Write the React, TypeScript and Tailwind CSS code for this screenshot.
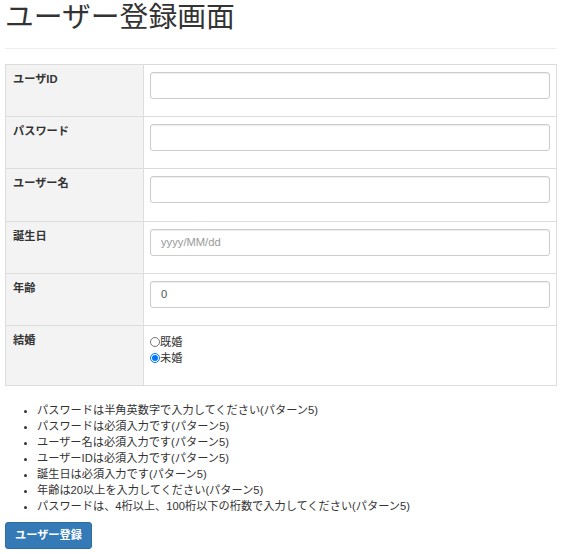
import { FC } from 'react';

const font = { fontFamily: '"Liberation Sans", "Noto Sans CJK JP", sans-serif' };

const rows: { label: string; placeholder?: string; value?: string }[] = [
  { label: 'ユーザID' },
  { label: 'パスワード' },
  { label: 'ユーザー名' },
  { label: '誕生日', placeholder: 'yyyy/MM/dd' },
  { label: '年齢', value: '0' },
];

const errors = [
  'パスワードは半角英数字で入力してください(パターン5)',
  'パスワードは必須入力です(パターン5)',
  'ユーザー名は必須入力です(パターン5)',
  'ユーザーIDは必須入力です(パターン5)',
  '誕生日は必須入力です(パターン5)',
  '年齢は20以上を入力してください(パターン5)',
  'パスワードは、4桁以上、100桁以下の桁数で入力してください(パターン5)',
];

const App: FC = () => {
  return (
    <div className="min-h-[554px] bg-white px-[5px] text-[11.2px] leading-[16px] text-[#333]" style={font}>
      <h1 className="m-0 pt-[1px] text-[28.8px] font-normal leading-[32px] text-[#333]">
        ユーザー登録画面
      </h1>
      <hr className="mt-[15px] mb-[15px] w-[552px] border-t border-[#eee]" />

      <table className="w-[552px] border-collapse border border-[#ddd]">
        <tbody>
          {rows.map((row) => (
            <tr key={row.label} className="h-[52.2px]">
              <th className="w-[138px] border border-[#ddd] bg-[#f3f3f3] px-[7px] pt-[6px] pb-0 text-left align-top font-bold">
                {row.label}
              </th>
              <td className="border border-[#ddd] px-[6px] pt-[7px] pb-0 align-top">
                <input
                  type="text"
                  defaultValue={row.value}
                  placeholder={row.placeholder}
                  className="block h-[27px] w-full rounded-[3px] border border-[#ccc] px-[10px] text-[11.2px] text-[#555] shadow-[inset_0_1px_1px_rgba(0,0,0,0.075)] outline-none placeholder:text-[#999]"
                />
              </td>
            </tr>
          ))}
          <tr>
            <th className="w-[138px] border border-[#ddd] bg-[#f3f3f3] px-[7px] pt-[6px] pb-[6px] text-left align-top font-bold">
              結婚
            </th>
            <td className="h-[60px] border border-[#ddd] px-[6px] pt-[8px] pb-[6px] align-top">
              <label className="flex items-center">
                <input type="radio" name="married" className="m-0 h-[10px] w-[10px]" />
                <span>既婚</span>
              </label>
              <label className="flex items-center">
                <input type="radio" name="married" defaultChecked className="m-0 h-[10px] w-[10px]" />
                <span>未婚</span>
              </label>
            </td>
          </tr>
        </tbody>
      </table>

      <ul className="mt-[16px] mb-[8px] list-disc pl-[32px]">
        {errors.map((e) => (
          <li key={e}>{e}</li>
        ))}
      </ul>

      <button
        type="button"
        className="h-[27px] rounded-[3px] border border-[#2e6da4] bg-[#337ab7] px-[9px] text-[11.2px] font-bold text-white"
      >
        ユーザー登録
      </button>
    </div>
  );
};

export default App;
